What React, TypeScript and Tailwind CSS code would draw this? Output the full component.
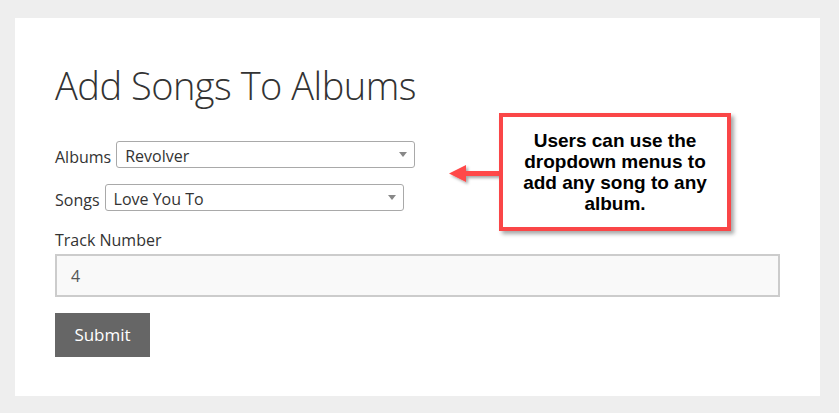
import React from "react";

function FakeSelect({ value, width }: { value: string; width: string }) {
  return (
    <div
      className={`relative h-[27px] ${width} rounded-[3px] border border-[#a9a9a9] bg-white pl-[8px] text-[16px] leading-[25px] text-[#333]`}
    >
      <span className="relative top-[2px]">{value}</span>
      <svg className="absolute right-[7px] top-[10px]" width="8" height="5" viewBox="0 0 8 5">
        <path d="M0 0 L8 0 L4 5 Z" fill="#888" />
      </svg>
    </div>
  );
}

export default function App() {
  return (
    <div
      className="relative h-[413px] w-[839px] overflow-hidden bg-[#eeeeee] pt-[18px] pl-[15px]"
      style={{ fontFamily: '"Segoe UI", "Open Sans", "Noto Sans", sans-serif' }}
    >
      <div className="h-[378px] w-[805px] bg-white pl-[40px] pt-[43px]">
        <h1 className="text-[38px] font-light leading-[48px] text-[#333] tracking-[-0.5px]">
          Add Songs To Albums
        </h1>
        <div className="mt-[32px] flex items-end gap-[5px] text-[16px] text-[#333]">
          <span className="leading-[22px]">Albums</span>
          <FakeSelect value="Revolver" width="w-[299px]" />
        </div>
        <div className="mt-[16px] flex items-end gap-[5px] text-[16px] text-[#333]">
          <span className="leading-[22px]">Songs</span>
          <FakeSelect value="Love You To" width="w-[299px]" />
        </div>
        <div className="mt-[18px] text-[16px] leading-[22px] text-[#333]">Track Number</div>
        <div className="mt-[3px] flex h-[43px] w-[725px] items-center border-2 border-[#cccccc] bg-[#f9f9f9] pl-[14px] text-[16px] text-[#555]">
          4
        </div>
        <button className="mt-[16px] flex h-[44px] w-[95px] items-center justify-center bg-[#666666] text-[17px] text-white">
          Submit
        </button>
      </div>

      {/* annotation overlay */}
      <svg
        className="absolute left-[445px] top-[162px]"
        width="60"
        height="28"
        viewBox="0 0 60 28"
      >
        <defs>
          <filter id="sh" x="-20%" y="-40%" width="140%" height="180%">
            <feDropShadow dx="2" dy="2" stdDeviation="1.5" floodColor="#000" floodOpacity="0.35" />
          </filter>
        </defs>
        <g filter="url(#sh)">
          <path d="M4 11.5 L21 3 L21 9 L56 9 L56 14 L21 14 L21 20 Z" fill="#ff4848" />
        </g>
      </svg>
      <div
        className="absolute left-[499px] top-[113px] flex h-[118px] w-[232px] items-center justify-center border-4 border-[#fa4647] bg-white text-center text-[19px] font-bold leading-[21px] text-black shadow-[3px_3px_4px_rgba(0,0,0,0.35)]"
        style={{ fontFamily: '"Liberation Sans", Arial, sans-serif' }}
      >
        <div className="pb-[1px]">
          Users can use the
          <br />
          dropdown menus to
          <br />
          add any song to any
          <br />
          album.
        </div>
      </div>
    </div>
  );
}
